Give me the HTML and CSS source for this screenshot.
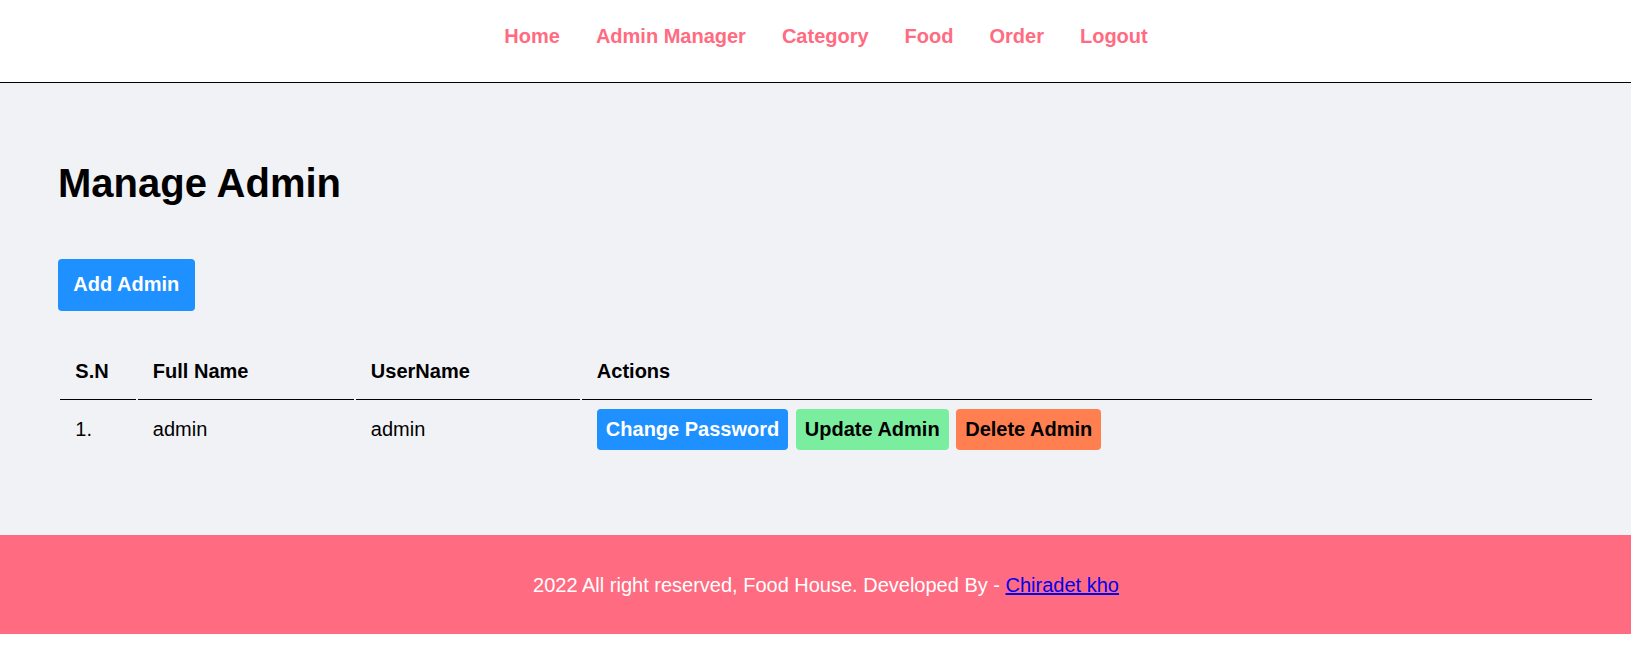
FILE: index.html
```html
<!DOCTYPE html>
<html lang="en">
<head>
<meta charset="utf-8">
<title>Food House - Manage Admin</title>
<link rel="stylesheet" href="styles.css">
</head>
<body>
<header class="menu">
  <nav class="wrapper nav-list">
    <a class="nav-link" href="#">Home</a>
    <a class="nav-link" href="#">Admin Manager</a>
    <a class="nav-link" href="#">Category</a>
    <a class="nav-link" href="#">Food</a>
    <a class="nav-link" href="#">Order</a>
    <a class="nav-link" href="#">Logout</a>
  </nav>
</header>

<main class="main-content">
  <div class="wrapper">
    <h1 class="page-title">Manage Admin</h1>
    <div class="add-row">
      <a class="btn-add" href="#">Add Admin</a>
    </div>
    <table class="tbl-full">
      <tr>
        <th class="col-sn">S.N</th>
        <th class="col-name">Full Name</th>
        <th class="col-user">UserName</th>
        <th class="col-actions">Actions</th>
      </tr>
      <tr>
        <td>1.</td>
        <td>admin</td>
        <td>admin</td>
        <td><a class="btn btn-primary" href="#">Change Password</a> <a class="btn btn-secondary" href="#">Update Admin</a> <a class="btn btn-danger" href="#">Delete Admin</a></td>
      </tr>
    </table>
  </div>
</main>

<footer class="footer">
  <div class="wrapper footer-text">2022 All right reserved, Food House. Developed By - <a class="footer-link" href="#">Chiradet kho</a></div>
</footer>
</body>
</html>
```

FILE: styles.css
```css
* {
  box-sizing: border-box;
}

body {
  margin: 0;
  font-family: "Liberation Sans", Arial, sans-serif;
  font-size: 20px;
  line-height: 23px;
  color: #000;
  background: #fff;
}

.wrapper {
  padding-left: 58px;
  padding-right: 37px;
}

.menu {
  height: 83px;
  border-bottom: 1px solid #000;
  background: #fff;
}

.nav-list {
  display: flex;
  justify-content: center;
  gap: 36px;
  padding-top: 25px;
}

.nav-link {
  font-weight: bold;
  color: #ff6b81;
  text-decoration: none;
}

.main-content {
  background: #f1f2f6;
  padding-top: 77px;
  padding-bottom: 77px;
}

.page-title {
  margin: 0;
  font-size: 40px;
  line-height: 46px;
  font-weight: bold;
}

.add-row {
  margin-top: 53px;
  height: 52px;
}

.btn-add {
  display: inline-block;
  height: 52px;
  padding: 14px 15.36px 15px;
  background: #1e90ff;
  color: #fff;
  font-weight: bold;
  text-decoration: none;
  border-radius: 4px;
}

.tbl-full {
  width: 1536px;
  margin-top: 32px;
  border-spacing: 2px;
}

.tbl-full th {
  text-align: left;
  font-weight: bold;
  padding: 15.36px;
  border-bottom: 1px solid #000;
}

.tbl-full td {
  padding: 16.36px 15.36px 15.36px;
}

.col-sn {
  width: 75.5px;
}

.col-name {
  width: 216px;
}

.col-user {
  width: 224px;
}

.btn {
  padding: 9px 9px 10px;
  border-radius: 4px;
  font-weight: bold;
  text-decoration: none;
  margin-right: 2px;
}

.btn-primary {
  background: #1e90ff;
  color: #fff;
}

.btn-secondary {
  background: #7bed9f;
  color: #000;
}

.btn-danger {
  background: #ff7f50;
  color: #000;
}

.footer {
  background: #ff6b81;
  color: #fff;
  height: 99px;
  padding-top: 39px;
}

.footer-text {
  text-align: center;
}

.footer-link {
  color: #0000ee;
  text-decoration: underline;
}
```
